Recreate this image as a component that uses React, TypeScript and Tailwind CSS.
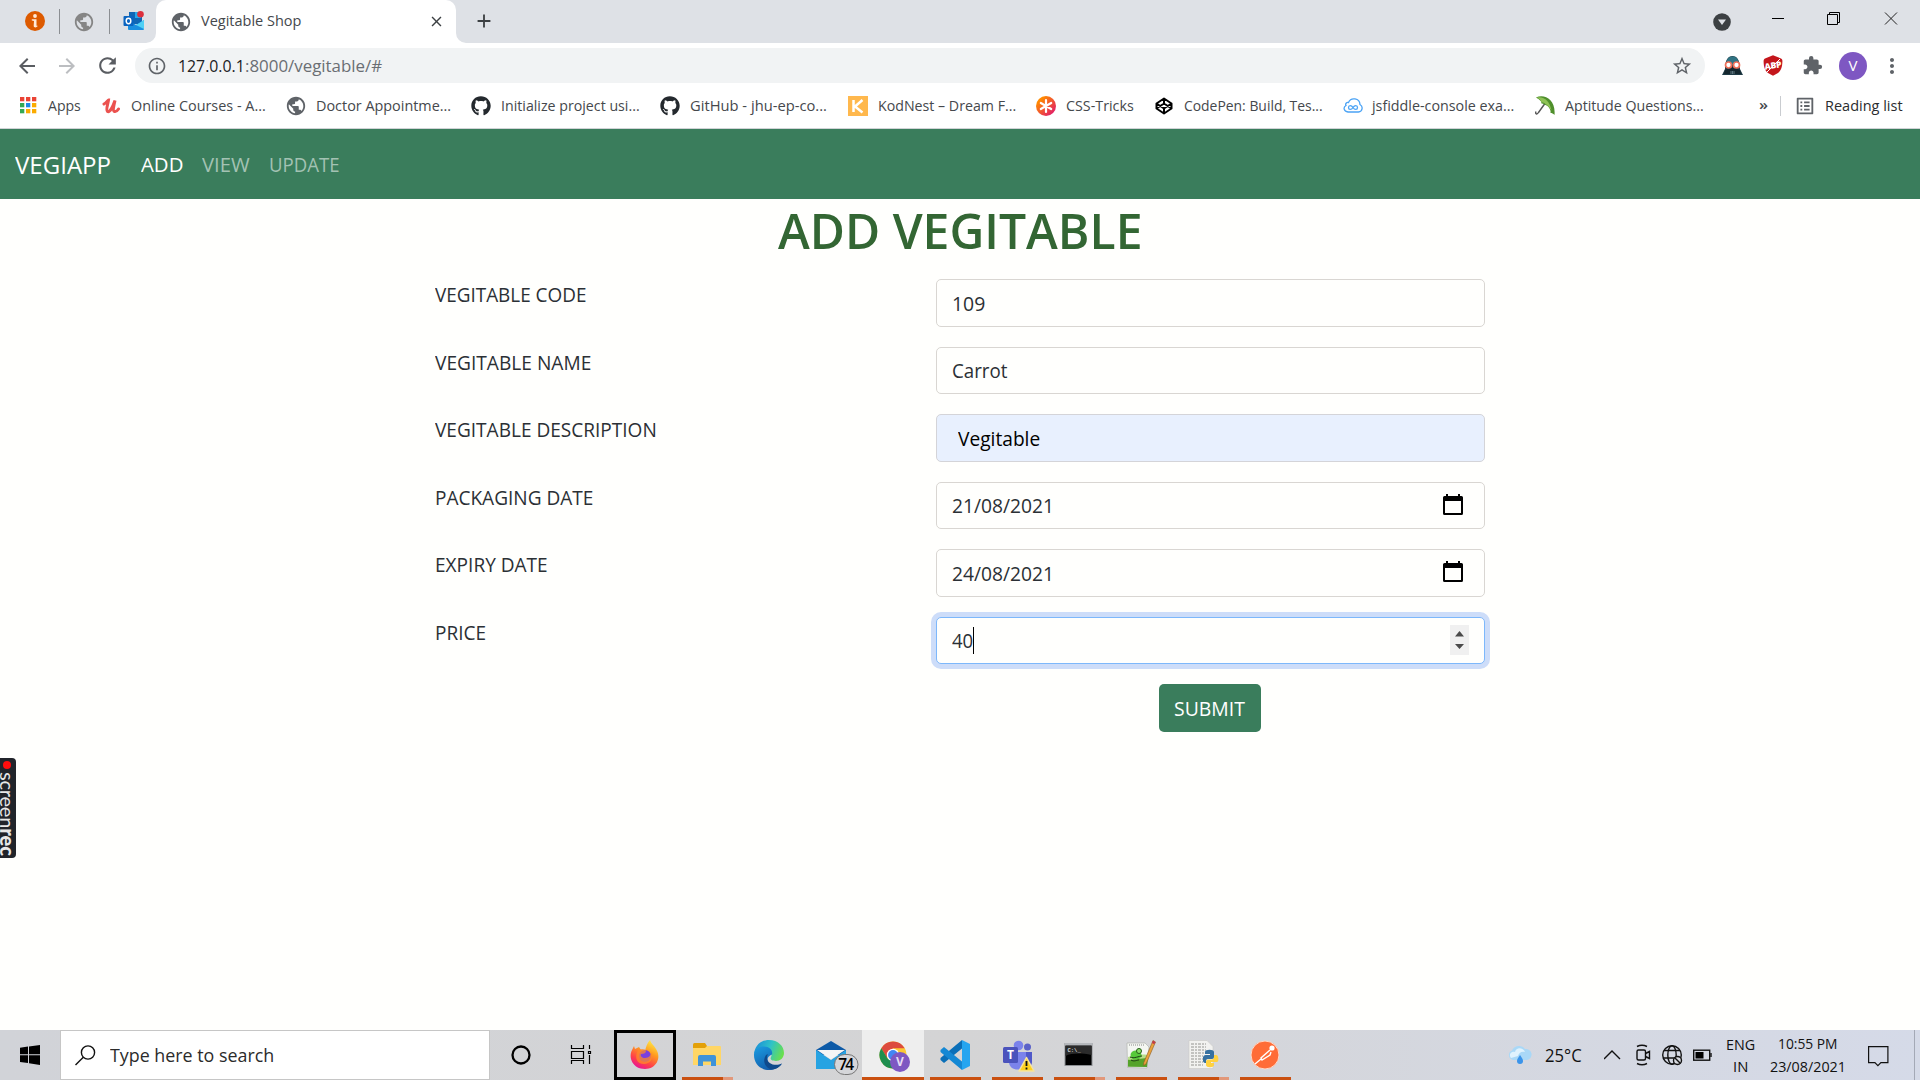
import { useLayoutEffect, useRef, type ReactNode } from "react";
import {
  MdPublic,
  MdStarBorder,
  MdExtension,
  MdMoreVert,
  MdArrowBack,
  MdArrowForward,
  MdRefresh,
  MdInfoOutline,
  MdClose,
  MdAdd,
  MdListAlt,
} from "react-icons/md";
import { FaGithub } from "react-icons/fa";

/* Text that condenses or widens itself to a given width. */
function Fit({ w, className = "", children }: { w: number; className?: string; children: ReactNode }) {
  const ref = useRef<HTMLSpanElement>(null);
  useLayoutEffect(() => {
    const el = ref.current;
    if (el) el.style.transform = `scaleX(${w / el.offsetWidth})`;
  }, [w]);
  return (
    <span className={`block shrink-0 ${className}`} style={{ width: w }}>
      <span ref={ref} className="inline-block origin-left whitespace-pre">
        {children}
      </span>
    </span>
  );
}

function OutlookIcon() {
  return (
    <svg width="22" height="20" viewBox="0 0 22 20">
      <rect x="6" y="1" width="13" height="12" fill="#1066b5" />
      <rect x="12" y="1" width="6" height="6" fill="#28a8ea" />
      <path d="M5 9l8 5 8-5v9a1 1 0 0 1-1 1H6a1 1 0 0 1-1-1z" fill="#1a8fe0" />
      <path d="M21 9v9l-8-4z" fill="#50d0f5" />
      <rect x="0.500" y="5" width="10" height="10" rx="1" fill="#0a64c0" />
      <ellipse cx="5.500" cy="10" rx="2.300" ry="2.700" fill="none" stroke="#fff" strokeWidth="1.500" />
      <circle cx="17.500" cy="3.300" r="3.300" fill="#dc2f3c" />
    </svg>
  );
}

function TabStrip() {
  return (
    <div className="flex h-[43px] bg-[#dee1e6]">
      <div className="flex h-[43px] w-[156px] items-center pl-[25px]">
        <svg className="mb-px" width="20" height="20" viewBox="0 0 20 20">
          <circle cx="10" cy="10" r="10" fill="#dd5a00" />
          <circle cx="10" cy="5" r="1.900" fill="#ffe9d8" />
          <path d="M6.800 8.300h4.700v6c0 .8.800.8 1.500.3-.8 2.300-4.600 2.500-4.300-.2l.3-4.500-2.200-.4z" fill="#ffe9d8" />
        </svg>
        <div className="ml-[14px] h-[25px] w-px bg-[#8b8e92]" />
        <MdPublic className="ml-[13px] size-[22px] text-[#858585]" />
        <div className="ml-[14px] h-[25px] w-px bg-[#8b8e92]" />
        <div className="ml-[13px] mb-px">
          <OutlookIcon />
        </div>
      </div>
      <div className="relative flex h-[43px] w-[300px] items-center rounded-t-[10px] bg-white">
        <svg className="absolute -left-[10px] bottom-0" width="10" height="10">
          <path d="M10 0V10H0A10 10 0 0 0 10 0z" fill="#fff" />
        </svg>
        <svg className="absolute -right-[10px] bottom-0" width="10" height="10">
          <path d="M0 0V10H10A10 10 0 0 1 0 0z" fill="#fff" />
        </svg>
        <MdPublic className="ml-[14px] size-[22px] text-[#5f6368]" />
        <Fit w={100} className="ml-[9px] pb-px text-[14.500px] leading-5 text-[#45484c]">
          Vegitable Shop
        </Fit>
        <MdClose className="ml-[127px] size-[17px] text-[#3c4043]" />
      </div>
      <MdAdd className="mt-[10px] ml-[17px] size-[22px] text-[#3c4043]" />
      <div className="ml-auto flex h-[43px]">
        <svg className="mt-[13px]" width="18" height="18" viewBox="0 0 18 18">
          <circle cx="9" cy="9" r="8.800" fill="#3c4043" />
          <path d="M5 6.500h8L9 12z" fill="#dee1e6" />
        </svg>
        <svg className="ml-[41px]" width="148" height="43" viewBox="0 0 148 43" fill="none" stroke="#000">
          <path d="M-1 18.500H12" />
          <path d="M55.500 14.500h10v10h-10zM57.500 14v-1.500h10v10H66" />
          <path d="M113 12.500l12 12M125 12.500l-12 12" stroke="#222" />
        </svg>
      </div>
    </div>
  );
}

function Toolbar() {
  return (
    <div className="flex h-[45px] items-center bg-white">
      <MdArrowBack className="ml-[15px] size-[24px] text-[#5a5d62]" />
      <MdArrowForward className="ml-[16px] size-[24px] text-[#bcbec1]" />
      <MdRefresh className="ml-[16px] size-[25px] text-[#5a5d62]" />
      <div className="ml-[15px] flex h-[35px] w-[1570px] items-center rounded-full bg-[#f1f3f4]">
        <MdInfoOutline className="ml-[12px] size-[20px] text-[#5f6368]" />
        <Fit w={67} className="ml-[11px] text-[17px] text-[#202124]">
          127.0.0.1
        </Fit>
        <Fit w={137} className="text-[17px] text-[#6a6e73]">
          :8000/vegitable/#
        </Fit>
        <MdStarBorder className="mr-[12px] ml-auto size-[22px] text-[#5f6368]" />
      </div>
      <svg className="ml-[17px]" width="21" height="20" viewBox="0 0 21 20">
        <path d="M3 13C3 4 6 0 10.500 0S18 4 18 13l3 6H0z" fill="#1f3b46" />
        <path d="M4 9c0-6 3-8.500 6.500-8.500S17 3 17 9z" fill="#2f7383" />
        <path d="M3 14l7.500-3 7.500 3 1 4H2z" fill="#14262e" />
        <circle cx="6.500" cy="9" r="3" fill="#fff" stroke="#ee6f57" strokeWidth="1.700" />
        <circle cx="14.500" cy="9" r="3" fill="#fff" stroke="#ee6f57" strokeWidth="1.700" />
        <path d="M9 15v3M10.500 15v3M12 15v3" stroke="#6f8a94" strokeWidth="0.800" />
      </svg>
      <svg className="ml-[20px]" width="20" height="21" viewBox="0 0 20 21">
        <path d="M10 .3l8 3.200c1.200.6 1.500 1.500 1.400 3-.2 6-1.400 9-4.400 11.500L10 20.700 5 18C2 15.500.800 12.500.600 6.500c0-1.500.3-2.400 1.400-3z" fill="#c4161c" />
        <text x="10" y="13.500" textAnchor="middle" fontSize="8.500" fontWeight="800" fill="#fff" fontFamily="Open Sans, sans-serif" textLength="17" transform="rotate(-8 10 10)">
          ABP
        </text>
        <path d="M4 17L17 4" stroke="#fff" strokeWidth="1" />
      </svg>
      <MdExtension className="ml-[19px] size-[21px] text-[#5f6368]" />
      <div className="ml-[16px] flex size-[28px] items-center justify-center rounded-full bg-[#7e57c2] text-[15px] text-white">
        V
      </div>
      <MdMoreVert className="ml-[13px] size-[24px] text-[#5f6368]" />
    </div>
  );
}

const appColours = ["#ea4335", "#ea4335", "#ea4335", "#34a853", "#1e88e5", "#fbab00", "#34a853", "#fbab00", "#fbab00"];

const bookmarks: { slot: string; icon: ReactNode; gap: string; label: string; w: number }[] = [
  {
    slot: "w-[82px]",
    icon: (
      <svg width="17" height="17" viewBox="0 0 17 17">
        {appColours.map((c, i) => (
          <rect key={i} x={(i % 3) * 6} y={Math.floor(i / 3) * 6} width="4.300" height="4.300" fill={c} />
        ))}
      </svg>
    ),
    gap: "w-[28px]",
    label: "Apps",
    w: 33,
  },
  {
    slot: "w-[185px]",
    icon: (
      <svg width="18" height="16" viewBox="0 0 18 16" fill="none" stroke="#eb524f" strokeWidth="3" strokeLinecap="round">
        <path d="M2 6C4 5 6 2 6.500 2 6 6 3.500 12 5.500 13.500 8 15 11 8 13 2.500 12 7 10.500 13 12.500 13.500 14 14 15.500 12.500 16.500 11" />
      </svg>
    ),
    gap: "w-[29px]",
    label: "Online Courses - A...",
    w: 135,
  },
  { slot: "w-[184px]", icon: <MdPublic className="-ml-[2px] size-[22px] text-[#5f6368]" />, gap: "w-[29px]", label: "Doctor Appointme...", w: 135 },
  { slot: "w-[189px]", icon: <FaGithub className="size-[20px] text-[#24292e]" />, gap: "w-[30px]", label: "Initialize project usi...", w: 139 },
  { slot: "w-[188px]", icon: <FaGithub className="size-[20px] text-[#24292e]" />, gap: "w-[30px]", label: "GitHub - jhu-ep-co...", w: 137 },
  {
    slot: "w-[188px]",
    icon: (
      <svg width="20" height="20" viewBox="0 0 20 20">
        <rect width="20" height="20" fill="#ffb84d" />
        <path d="M5.500 4v12M14.500 4L7 10.500 14.500 16.500" fill="none" stroke="#fff" strokeWidth="2.500" />
      </svg>
    ),
    gap: "w-[30px]",
    label: "KodNest – Dream F...",
    w: 138,
  },
  {
    slot: "w-[119px]",
    icon: (
      <svg width="20" height="20" viewBox="0 0 20 20">
        <defs>
          <linearGradient id="cssTricks" x1="0" y1="0" x2="1" y2="1">
            <stop offset="0.200" stopColor="#ff8a00" />
            <stop offset="0.900" stopColor="#e0196c" />
          </linearGradient>
        </defs>
        <circle cx="10" cy="10" r="10" fill="url(#cssTricks)" />
        <path d="M10 4v12M4.800 7l10.400 6M4.800 13l10.400-6" stroke="#fff" strokeWidth="2.200" strokeLinecap="round" />
      </svg>
    ),
    gap: "w-[30px]",
    label: "CSS-Tricks",
    w: 68,
  },
  {
    slot: "w-[188px]",
    icon: (
      <svg width="18" height="18" viewBox="0 0 18 18" fill="none" stroke="#000" strokeWidth="2" strokeLinejoin="round">
        <path d="M9 1.500l7.500 5v5L9 16.500 1.500 11.500v-5zM9 1.500v5M9 16.500v-5M1.500 6.500l7.500 5 7.500-5M1.500 11.500l7.500-5 7.500 5" />
      </svg>
    ),
    gap: "w-[29px]",
    label: "CodePen: Build, Tes...",
    w: 139,
  },
  {
    slot: "w-[192px]",
    icon: (
      <svg width="20" height="15" viewBox="0 0 20 15" fill="none" stroke="#4ba3f5" strokeWidth="1.300">
        <path d="M5 14h10.500a4 4 0 0 0 1.500-7.500A6 6 0 0 0 5.500 4.500C3.500 4 2 6 3 7.500 0 9 .500 13.500 5 14z" />
        <path d="M10 9.500C8.500 7 5.500 7 5.500 9.500s3 2.500 4.500 0 4.500-2.500 4.500 0-3 2.500-4.500 0z" />
      </svg>
    ),
    gap: "w-[29px]",
    label: "jsfiddle-console exa...",
    w: 142,
  },
  {
    slot: "w-[220px]",
    icon: (
      <svg width="21" height="20" viewBox="0 0 21 20">
        <path d="M11 6L3.500 16.500c-1.500 2.500-3.500 1.500-2.500-1" fill="none" stroke="#555" strokeWidth="1.400" />
        <path d="M1 1.500C9-2.500 21 3 19.500 19c-1.500-1.500-2.500-2-4-2 .5-3-1-5-3-7-2-1-3.500-2.500-6-2.500 0-3-2.500-4-5.500-6z" fill="#4f8f2c" />
        <path d="M2 1.500c8-1 12.500 4 14.500 13C14 10 10 7 6.500 6 6 4 4 3 2 1.500z" fill="#8fc257" />
      </svg>
    ),
    gap: "w-[30px]",
    label: "Aptitude Questions...",
    w: 139,
  },
];

function BookmarksBar() {
  return (
    <div className="flex h-[41px] items-center border-b border-[#d0d3d6] bg-white pb-[5px] pl-[20px] text-[14.500px] leading-5 text-[#45484c]">
      {bookmarks.map((b) => (
        <div key={b.label} className={`flex shrink-0 items-center ${b.slot}`}>
          <div className={`flex h-5 shrink-0 items-center ${b.gap}`}>{b.icon}</div>
          <Fit w={b.w} className="pt-px">
            {b.label}
          </Fit>
        </div>
      ))}
      <Fit w={9} className="ml-[4px] pb-[2px] font-semibold">
        »
      </Fit>
      <div className="ml-[12px] h-[20px] w-px bg-[#c9ccd0]" />
      <MdListAlt className="ml-[13px] size-[22px] text-[#5f6368]" />
      <Fit w={78} className="ml-[9px] pt-px text-[#2a2c2f]">
        Reading list
      </Fit>
    </div>
  );
}

const CalendarIcon = () => (
  <svg width="20" height="22" viewBox="0 0 20 22">
    <path d="M3 0h2v2h10V0h2v2h1.500A1.500 1.500 0 0 1 20 3.500v16a1.500 1.500 0 0 1-1.500 1.500h-17A1.500 1.500 0 0 1 0 19.500v-16A1.500 1.500 0 0 1 1.500 2H3zM2 7v12h16V7z" fill="#000" fillRule="evenodd" />
  </svg>
);

const fields: { label: string; lw: number; value: string; vw: number; kind?: "filled" | "date" | "number" }[] = [
  { label: "VEGITABLE CODE", lw: 151, value: "109", vw: 33 },
  { label: "VEGITABLE NAME", lw: 156, value: "Carrot", vw: 55 },
  { label: "VEGITABLE DESCRIPTION", lw: 222, value: "Vegitable", vw: 82, kind: "filled" },
  { label: "PACKAGING DATE", lw: 158, value: "21/08/2021", vw: 102, kind: "date" },
  { label: "EXPIRY DATE", lw: 113, value: "24/08/2021", vw: 102, kind: "date" },
  { label: "PRICE", lw: 51, value: "40", vw: 21, kind: "number" },
];

function Field({ f }: { f: (typeof fields)[number] }) {
  const look =
    f.kind === "filled"
      ? "border-[#d4d4d8] bg-[#e8f0fe] pl-[21px] text-black"
      : f.kind === "number"
        ? "border-[#7db8fb] bg-[#fffffd] pl-[15px] ring-[5px] ring-[#cdddf9]"
        : "border-[#d9d6d2] bg-[#fffffd] pl-[15px]";
  return (
    <div className="flex h-[47.500px]">
      <div className="w-[501px]">
        <Fit w={f.lw} className="leading-[31px]">
          {f.label}
        </Fit>
      </div>
      <div className={`flex w-[549px] items-center rounded-[5px] border leading-[30px] ${look}`}>
        <Fit w={f.vw} className="pt-[2px]">
          {f.value}
        </Fit>
        {f.kind === "date" && (
          <div className="mr-[21px] mb-px ml-auto">
            <CalendarIcon />
          </div>
        )}
        {f.kind === "number" && (
          <>
            <div className="h-[27px] w-px bg-black" />
            <svg className="mr-[15px] ml-auto" width="19" height="30" viewBox="0 0 19 30">
              <rect width="19" height="30" fill="#f0f0f0" />
              <path d="M5 11.500L9.500 6l4.500 5.500zM5 19l4.500 5 4.500-5z" fill="#4a4a4a" />
            </svg>
          </>
        )}
      </div>
    </div>
  );
}

function Page() {
  return (
    <div className="relative h-[901px] bg-[#fffffd] text-[19.400px] text-[#2b3035]">
      <nav className="flex h-[70px] items-center bg-[#3a7d5c] pl-[15px] text-white">
        <Fit w={96} className="pt-[3px] text-[24.300px]">
          VEGIAPP
        </Fit>
        <Fit w={42} className="ml-[30px] pt-[2px]">
          ADD
        </Fit>
        <Fit w={48} className="ml-[19px] pt-[2px] text-[#a3c2b3]">
          VIEW
        </Fit>
        <Fit w={71} className="ml-[19px] pt-[2px] text-[#a3c2b3]">
          UPDATE
        </Fit>
      </nav>
      <h1 className="flex h-[80px] justify-center text-[49.500px] leading-[62px] font-semibold text-[#336633]">
        <Fit w={364}>ADD VEGITABLE</Fit>
      </h1>
      <div className="flex flex-col gap-[20px] pl-[435px]">
        {fields.map((f) => (
          <Field key={f.label} f={f} />
        ))}
        <div className="ml-[501px] flex w-[547px] justify-center self-start">
          <div className="flex h-[48px] w-[102px] items-center justify-center rounded-[5px] bg-[#3a7d5c] text-white">
            <Fit w={71} className="pt-[2px]">
              SUBMIT
            </Fit>
          </div>
        </div>
      </div>
      <div className="absolute top-[629px] left-0 flex h-[100px] w-[16px] flex-col items-center rounded-r-[4px] bg-[#21242a]">
        <div className="mt-[3px] mr-[2px] size-[8px] shrink-0 rounded-full bg-[#ff0d0d]" />
        <div className="mt-[3px] font-[Lato] text-[20px] leading-[16px] text-[#e8e8e8] [writing-mode:vertical-rl]">
          <span className="tracking-[-0.200px]">screen</span>
          <span className="font-black">rec</span>
        </div>
      </div>
    </div>
  );
}

const firefox = (
  <>
    <defs>
      <linearGradient id="ff" x1="0.800" y1="0" x2="0.300" y2="1">
        <stop offset="0" stopColor="#fff04a" />
        <stop offset="0.400" stopColor="#ff9a1f" />
        <stop offset="0.750" stopColor="#ff3f4a" />
        <stop offset="1" stopColor="#e6129a" />
      </linearGradient>
    </defs>
    <path d="M20 16l1 3 4-2 2 3 4 1c1-4 2-8 5-11 1 4 4 5 6 9 6 9 0 20-11 20-12 0-17-11-13-19z" fill="url(#ff)" />
    <circle cx="31" cy="26" r="6" fill="#7a3fe0" />
    <path d="M24 20c4-2 8-1 8 1s-2 3-5 3c-1 2 1 4 4 4 4 0 6-3 6-6 3 7-1 12-7 12-7 0-10-6-6-14z" fill="#ff8a2a" opacity="0.750" />
  </>
);
const explorer = (
  <>
    <path d="M17 14.500a1.500 1.500 0 0 1 1.500-1.500H29l2 3v5H17z" fill="#e3a008" />
    <path d="M17 18h12l2-2h13a1 1 0 0 1 1 1v18H17z" fill="#ffd666" />
    <path d="M22 36V27a2 2 0 0 1 2-2h14a2 2 0 0 1 2 2v9h-5v-4.500h-8V36z" fill="#3f93d9" />
  </>
);
const edge = (
  <>
    <defs>
      <linearGradient id="edgeTop" x1="0" y1="0.300" x2="1" y2="0.600">
        <stop offset="0" stopColor="#1a8fd8" />
        <stop offset="0.500" stopColor="#2fc2c8" />
        <stop offset="1" stopColor="#6be04a" />
      </linearGradient>
      <linearGradient id="edgeLow" x1="0" y1="0" x2="0.600" y2="1">
        <stop offset="0" stopColor="#1b9de2" />
        <stop offset="1" stopColor="#1259a8" />
      </linearGradient>
    </defs>
    <path d="M16 24C17 15 23 10 31 10c9 0 15 6 15 13 0 5-4 8-8 8-5 0-6-2-5-4 2-4-1-8-6-8-5 0-9 2-11 5z" fill="url(#edgeTop)" />
    <path d="M16 24c1-5 5-7.500 10-7.500 6 0 9 4 8 8-6 2-6 8 0 11 4 1 7 0 10-2-3 4-7 6.500-13 6.500-9 0-15.500-7-15-16z" fill="url(#edgeLow)" />
    <path d="M28 25c-4 6-1 13 6 14.500 5-.5 8-3 10-6-6 3-15 1-15-6 0-1 .5-2.500 1-3.500z" fill="#0f4a8c" />
  </>
);
const mail = (
  <>
    <path d="M16 20l15-9 15 9v5H16z" fill="#0d5aa7" />
    <path d="M16 20l15 10 15-10v19H16z" fill="#27a3e2" />
    <path d="M17 20h28L31 29.500z" fill="#f5f5f5" />
    <rect x="34.500" y="24.500" width="23.500" height="20" rx="10" fill="#d5d6d9" stroke="#777" />
    <text x="46.200" y="40.300" textAnchor="middle" fontSize="15.500" fontWeight="600" fill="#000" fontFamily="Open Sans, sans-serif" textLength="16">
      74
    </text>
  </>
);
const chrome = (
  <>
    <circle cx="31" cy="25" r="13.500" fill="#fcc934" />
    <path d="M19.300 18.200A13.500 13.500 0 0 1 42.700 18.300H31L25 28z" fill="#dd4b3e" />
    <path d="M19.300 18.200A13.500 13.500 0 0 0 31 38.500L36.500 28.500 25.500 28.500z" fill="#1e8e4e" />
    <circle cx="31" cy="25" r="6.200" fill="#fff" />
    <circle cx="31" cy="25" r="4.900" fill="#4285f4" />
    <circle cx="38" cy="32" r="10" fill="#7e57c2" />
    <text x="38" y="36.300" textAnchor="middle" fontSize="12" fontWeight="700" fill="#e6dcf5" fontFamily="Open Sans, sans-serif">
      V
    </text>
  </>
);
const vscode = (
  <>
    <path d="M38 10v8.500L20 33l-3.500-3v-2z" fill="#0a6fb8" />
    <path d="M16.500 20l3.500-3L38 31.500V40L16.500 22z" fill="#1488d4" />
    <path d="M38 10l8 4v22l-8 4z" fill="#25a5f0" />
  </>
);
const teams = (
  <g transform="translate(-2 0)">
    <circle cx="43.500" cy="17" r="3.500" fill="#5b62c8" />
    <circle cx="34.500" cy="15.500" r="4.800" fill="#7b83eb" />
    <path d="M38 22h10v10c0 4-4 6-8 5z" fill="#5059c9" />
    <path d="M25 22h17v10c0 10-17 10-17 0z" fill="#7b83eb" />
    <rect x="19" y="17" width="15" height="16" rx="1.500" fill="#4b53bc" />
    <text x="26.500" y="29.300" textAnchor="middle" fontSize="12" fontWeight="700" fill="#fff" fontFamily="Open Sans, sans-serif">
      T
    </text>
    <path d="M42.500 27.500l7.500 13.500H35z" fill="#ffd21f" stroke="#f6e3a0" strokeWidth="1.500" strokeLinejoin="round" />
    <path d="M42.500 31v5M42.500 37.500v2" stroke="#111" strokeWidth="1.800" />
  </g>
);
const terminal = (
  <g transform="translate(-0.500 0)">
    <rect x="17.500" y="13.500" width="27" height="22" fill="#000" stroke="#8c8f93" />
    <rect x="17.500" y="13" width="27" height="2.500" fill="#b5b8bc" />
    <path d="M18 26c6-3 16-3 26-1V16H18z" fill="#2b2b2b" />
    <text x="20" y="21.500" fontSize="5.500" fontWeight="700" fill="#ddd" fontFamily="Liberation Mono, monospace">
      C:\_
    </text>
  </g>
);
const notepad = (
  <>
    <path d="M17 13h18l4 4-2 21-19.500-.5z" fill="#f4f6f2" stroke="#a9ada6" strokeWidth="0.600" />
    <path d="M18 29c6-2 13-3 20-2l-1 10-19-.3z" fill="#55a32a" />
    <path d="M18 27c6-2 13-3 19.500-2l-.3 3-19 2z" fill="#b7de8a" />
    <path d="M19 15h15" stroke="#888" strokeDasharray="1 1" />
    <ellipse cx="26" cy="25" rx="5.500" ry="4.500" fill="#56c93a" />
    <circle cx="29" cy="21" r="2.500" fill="#8be06a" stroke="#245c17" />
    <path d="M20 27c4 2 9-1 12-1M21 30c3 2 6 0 8 0" stroke="#1d3c14" fill="none" />
    <path d="M43 10.500l2.500 1.500L36 34l-2.500 1.500.3-3z" fill="#eba23a" stroke="#8a5a24" strokeWidth="0.600" />
    <path d="M43 10.500l2.500 1.500-1.200 2.300-2.400-1.300z" fill="#c33c4a" />
  </>
);
const python = (
  <>
    <path d="M17 10.500h18l6 6v22H17z" fill="#f2f2f0" stroke="#c9c9c6" strokeWidth="0.600" />
    <path d="M19 14h15M19 17h15M19 20h15M19 23h14M19 26h12M19 29h12M19 32h12M19 35h12" stroke="#b4b4b0" strokeWidth="1.300" strokeDasharray="3 1 2 1" />
    <g transform="translate(-1 0)">
      <path d="M32 30v-3a3 3 0 0 1 3-2h4v-1h-5v-2c0-3 9-3 9 0v5a2 2 0 0 1-2 2h-4a2 2 0 0 0-2 2v2c-3 0-3-2-3-3z" fill="#3670a0" />
      <path d="M43 25h2c3 0 3 7 1 7h-6v1h3v2c0 3-8 3-8 0v-3a2.500 2.500 0 0 1 2.500-2.500H41a2 2 0 0 0 2-2z" fill="#ffd140" />
    </g>
  </>
);
const postman = (
  <>
    <circle cx="31" cy="25" r="14" fill="#ff6c37" stroke="#ffd9c9" strokeWidth="1" />
    <circle cx="38" cy="18" r="2.600" fill="#fff" />
    <path d="M36 20l-9 8 1 2 8-5 1-3M27 29l-6 5" fill="none" stroke="#fff" strokeWidth="1.400" />
  </>
);
const cortana = <circle cx="31" cy="25" r="8.500" fill="none" stroke="#000" strokeWidth="2.300" />;
const taskView = (
  <path
    d="M19.500 15v3.500h12V15M19.500 34v-3.500h12V34M19.500 21.500h12v7h-12zM37.500 15v4M37.500 25v9M36.500 21.500h2v2h-2z"
    fill="none"
    stroke="#000"
    strokeWidth="1.200"
  />
);

const tasks: { name: string; icon: ReactNode; state?: "open" | "multi" | "active" | "framed" }[] = [
  { name: "cortana", icon: cortana },
  { name: "task-view", icon: taskView },
  { name: "firefox", icon: firefox, state: "framed" },
  { name: "explorer", icon: explorer, state: "multi" },
  { name: "edge", icon: edge },
  { name: "mail", icon: mail },
  { name: "chrome", icon: chrome, state: "active" },
  { name: "vscode", icon: vscode, state: "open" },
  { name: "teams", icon: teams, state: "open" },
  { name: "terminal", icon: terminal, state: "multi" },
  { name: "notepad", icon: notepad, state: "open" },
  { name: "python", icon: python, state: "multi" },
  { name: "postman", icon: postman, state: "open" },
];

function TaskButton({ t }: { t: (typeof tasks)[number] }) {
  const look = t.state === "active" ? "bg-[#eeeeee]" : t.state === "framed" ? "ring-[3px] ring-inset ring-black" : "";
  return (
    <div className={`flex h-[50px] w-[62px] shrink-0 flex-col items-center ${look}`}>
      <svg width="62" height="47" viewBox="0 0 62 47" className="block">
        {t.icon}
      </svg>
      {t.state === "active" && <div className="h-[3px] w-full bg-[#ca5010]" />}
      {t.state === "open" && <div className="h-[3px] w-[51px] bg-[#ca5010]" />}
      {t.state === "multi" && (
        <div className="flex h-[3px] w-[51px] bg-[#e2987a]">
          <div className="w-[41px] bg-[#ca5010]" />
        </div>
      )}
    </div>
  );
}

function Taskbar() {
  return (
    <div className="flex h-[50px] items-center bg-linear-to-r from-[#d1d3d8] via-[#d4d4d5] to-[#d5dae8] text-[#111]">
      <svg className="ml-[20px]" width="20" height="20" viewBox="0 0 20 20">
        <path d="M0 2.800L8 1.600v7.700H0zM9 1.500L20 0v9.300H9zM0 10.300h8V18L0 17zM9 10.300h11V20L9 18.300z" fill="#000" />
      </svg>
      <div className="ml-[20px] flex h-[50px] w-[430px] items-center border border-[#c6c6c6] bg-white">
        <svg className="ml-[14px]" width="21" height="21" viewBox="0 0 21 21" fill="none" stroke="#111" strokeWidth="1.400">
          <circle cx="13" cy="7.500" r="6.600" />
          <path d="M8.300 12.200L0.500 20" />
        </svg>
        <Fit w={164} className="ml-[14px] text-[18.300px] text-[#2b2b2b]">
          Type here to search
        </Fit>
      </div>
      {tasks.map((t) => (
        <TaskButton key={t.name} t={t} />
      ))}
      <div className="ml-auto flex h-[50px] items-center">
        <svg width="26" height="20" viewBox="0 0 26 20">
          <path d="M6 15a5 5 0 0 1-1-9.500A7.500 7.500 0 0 1 18 4a5.500 5.500 0 0 1 2 11z" fill="#a9d8f7" />
          <path d="M4 13c-3-4 1-7 4-6 1-5 8-5 10 0-4-1-6 1-7 4z" fill="#dff2fd" />
          <path d="M13 10c2 3 3 4.500 3 6a3 3 0 0 1-6 0c0-1.500 1-3 3-6z" fill="#3b94ea" />
        </svg>
        <Fit w={37} className="ml-[12px] text-[18px]">
          25°C
        </Fit>
        <svg className="ml-[22px]" width="110" height="50" viewBox="0 0 110 50" fill="none" stroke="#111" strokeWidth="1.400">
          <path d="M0 29l8-8 8 8" />
          <rect x="33" y="20" width="8.500" height="10" rx="1.500" />
          <path d="M41.500 23.500l4-2v7l-4-2M33 16.500c3-1.500 7-1.500 10 0M33 33.500c3 1.500 7 1.500 10 0" />
          <circle cx="68" cy="25" r="9.300" />
          <ellipse cx="68" cy="25" rx="4.200" ry="9.300" />
          <path d="M60 20.500h16M59 28h14" />
          <circle cx="73.500" cy="30.500" r="4" fill="#d6d8de" />
          <path d="M70.700 27.700l5.600 5.600" />
          <rect x="89.700" y="20.200" width="16" height="10" />
          <rect x="91.500" y="22" width="8" height="6.500" fill="#000" stroke="none" />
          <path d="M107 23v4" />
        </svg>
        <div className="ml-[12px] flex w-[29px] flex-col items-center text-[14.800px] leading-[22px]">
          <Fit w={29}>ENG</Fit>
          <Fit w={15}>IN</Fit>
        </div>
        <div className="ml-[14px] flex w-[77px] flex-col items-center text-[14.500px] leading-[23px]">
          <Fit w={60}>10:55 PM</Fit>
          <Fit w={76}>23/08/2021</Fit>
        </div>
        <svg className="mt-[2px] ml-[22px]" width="21" height="21" viewBox="0 0 21 21" fill="none" stroke="#111" strokeWidth="1.200">
          <path d="M.6.600h19.300v16h-7l-3 3-3-3H.6z" />
        </svg>
        <div className="mr-[5px] ml-[25px] h-[50px] w-px bg-[#a4a9b6]" />
      </div>
    </div>
  );
}

export default function App() {
  return (
    <div className="flex h-[1080px] w-[1920px] flex-col overflow-hidden font-['Open_Sans','Noto_Sans',sans-serif]">
      <TabStrip />
      <Toolbar />
      <BookmarksBar />
      <Page />
      <Taskbar />
    </div>
  );
}
